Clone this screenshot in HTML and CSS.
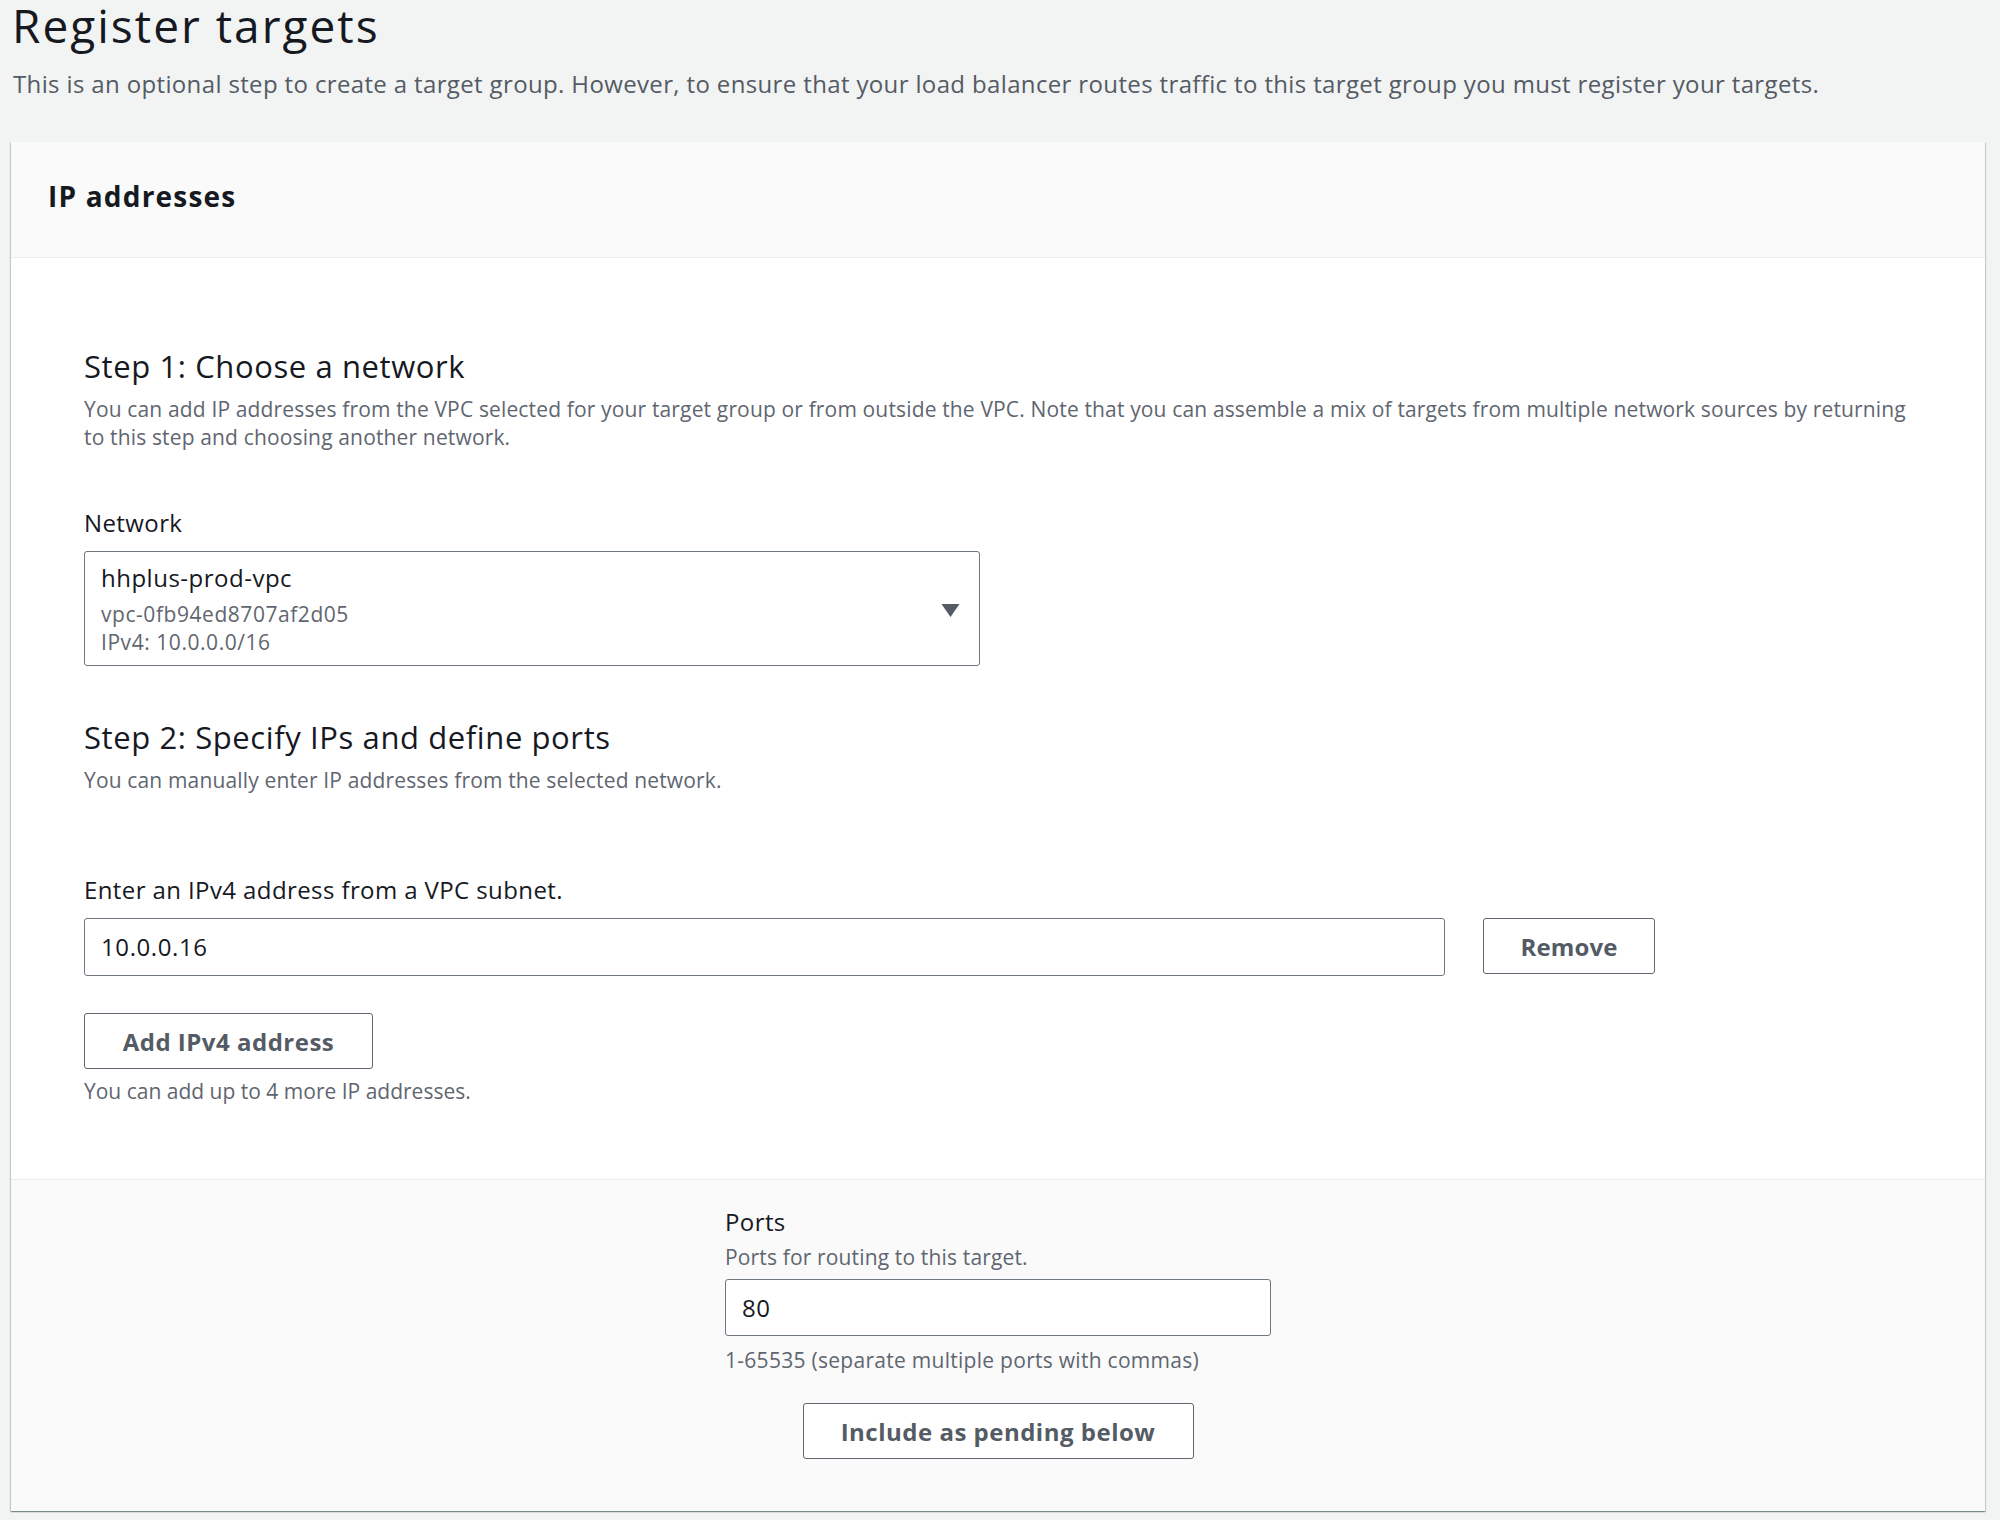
FILE: index.html
```html
<!DOCTYPE html>
<html lang="en">
<head>
<meta charset="utf-8">
<title>Register targets</title>
<link rel="stylesheet" href="styles.css">
</head>
<body>
<div class="page">
  <h1 class="title">Register targets</h1>
  <p class="subtitle">This is an optional step to create a target group. However, to ensure that your load balancer routes traffic to this target group you must register your targets.</p>

  <section class="panel">
    <header class="panel-head">
      <h2 class="panel-title">IP addresses</h2>
    </header>

    <div class="panel-body">
      <div class="step">
        <h3 class="step-title">Step 1: Choose a network</h3>
        <p class="desc">You can add IP addresses from the VPC selected for your target group or from outside the VPC. Note that you can assemble a mix of targets from multiple network sources by returning to this step and choosing another network.</p>
      </div>

      <div class="field field-network">
        <div class="label">Network</div>
        <div class="select">
          <div class="select-text">
            <div class="select-main">hhplus-prod-vpc</div>
            <div class="select-sub select-sub-first">vpc-0fb94ed8707af2d05</div>
            <div class="select-sub">IPv4: 10.0.0.0/16</div>
          </div>
          <svg class="caret" width="19" height="15" viewBox="0 0 19 15" aria-hidden="true"><path d="M0.5 1 L18.5 1 L9.5 14 Z" fill="#545b64"/></svg>
        </div>
      </div>

      <div class="step step-two">
        <h3 class="step-title">Step 2: Specify IPs and define ports</h3>
        <p class="desc">You can manually enter IP addresses from the selected network.</p>
      </div>

      <div class="field field-ip">
        <div class="label">Enter an IPv4 address from a VPC subnet.</div>
        <div class="ip-row">
          <div class="input input-ip">10.0.0.16</div>
          <button class="btn btn-remove">Remove</button>
        </div>
        <button class="btn btn-add">Add IPv4 address</button>
        <p class="hint">You can add up to 4 more IP addresses.</p>
      </div>
    </div>

    <div class="panel-foot">
      <div class="ports">
        <div class="label">Ports</div>
        <div class="desc ports-desc">Ports for routing to this target.</div>
        <div class="input input-port">80</div>
        <div class="hint ports-hint">1-65535 (separate multiple ports with commas)</div>
        <div class="ports-action">
          <button class="btn btn-include">Include as pending below</button>
        </div>
      </div>
    </div>
  </section>
</div>
</body>
</html>
```

FILE: styles.css
```css
* { box-sizing: border-box; }

html, body {
  margin: 0;
  padding: 0;
  background: #f2f3f3;
}

body {
  font-family: "Open Sans", "Noto Sans", sans-serif;
  color: #16191f;
}

.page {
  padding: 0 15px 0 11px;
  height: 1520px;
  overflow: hidden;
}

.title {
  margin: 0;
  font-size: 46px;
  line-height: 50px;
  font-weight: 400;
  letter-spacing: 2px;
  color: #16191f;
  padding-left: 1px;
}

.subtitle {
  margin: 16px 0 0 2px;
  font-size: 24px;
  line-height: 36px;
  letter-spacing: 0.36px;
  color: #545b64;
}

.panel {
  margin-top: 40px;
  background: #fff;
  box-shadow: 0 1px 1px 0 rgba(0, 28, 36, 0.3), 1px 1px 1px 0 rgba(0, 28, 36, 0.15), -1px 1px 1px 0 rgba(0, 28, 36, 0.15);
}

.panel-head {
  background: #fafafa;
  border-bottom: 1px solid #eaeded;
  padding: 34px 37px 41px;
}

.panel-title {
  margin: 0;
  font-size: 28px;
  line-height: 40px;
  font-weight: 700;
  letter-spacing: 1.2px;
  color: #16191f;
}

.panel-body {
  padding: 86px 73px 74px;
}

.step-title {
  margin: 0;
  font-size: 31px;
  line-height: 44px;
  font-weight: 400;
  letter-spacing: 0.6px;
  color: #16191f;
}

.desc {
  margin: 7px 0 0;
  font-size: 21px;
  line-height: 28px;
  letter-spacing: 0.15px;
  color: #5f6670;
}

.label {
  font-size: 24px;
  line-height: 36px;
  letter-spacing: 0.4px;
  color: #16191f;
}

.field-network {
  margin-top: 54px;
}

.select {
  margin-top: 10px;
  width: 896px;
  height: 115px;
  border: 1px solid #6f7781;
  border-radius: 3px;
  background: #fff;
  padding: 10px 19px 8px 16px;
  display: flex;
  align-items: center;
  justify-content: space-between;
}

.select-text {
  align-self: flex-start;
}

.select-main {
  font-size: 24px;
  line-height: 32px;
  letter-spacing: 0.5px;
  color: #16191f;
}

.select-sub {
  font-size: 21px;
  line-height: 28px;
  letter-spacing: 0.55px;
  color: #5f6670;
}

.select-sub-first {
  margin-top: 6px;
}

.caret {
  display: block;
  margin-top: 1px;
}

.step-two {
  margin-top: 49px;
}

.field-ip {
  margin-top: 78px;
}

.ip-row {
  margin-top: 10px;
  display: flex;
  align-items: flex-start;
  gap: 38px;
}

.input {
  height: 58px;
  border: 1px solid #6f7781;
  border-radius: 3px;
  background: #fff;
  padding: 0 16px;
  font-size: 24px;
  line-height: 56px;
  letter-spacing: 0.6px;
  color: #16191f;
}

.input-ip {
  width: 1361px;
}

.btn {
  display: inline-flex;
  align-items: center;
  justify-content: center;
  height: 56px;
  border: 1px solid #5f6670;
  border-radius: 3px;
  background: #fff;
  font-family: "Open Sans", "Noto Sans", sans-serif;
  font-size: 24px;
  font-weight: 700;
  letter-spacing: 0.5px;
  color: #545b64;
  padding: 0;
  cursor: pointer;
}

.btn-remove {
  width: 172px;
  letter-spacing: 0.1px;
}

.btn-add {
  display: flex;
  margin-top: 37px;
  width: 289px;
}

.hint {
  margin: 8px 0 0;
  font-size: 21px;
  line-height: 28px;
  color: #5f6670;
}

.panel-foot {
  background: #fafafa;
  border-top: 1px solid #eaeded;
  padding: 24px 0 52px;
  display: flex;
  justify-content: center;
}

.ports {
  width: 546px;
}

.ports-desc {
  margin-top: 3px;
}

.input-port {
  margin-top: 8px;
  height: 57px;
  line-height: 55px;
}

.ports-hint {
  margin-top: 10px;
  letter-spacing: 0.28px;
}

.ports-action {
  margin-top: 29px;
  display: flex;
  justify-content: center;
}

.btn-include {
  width: 391px;
}
```
